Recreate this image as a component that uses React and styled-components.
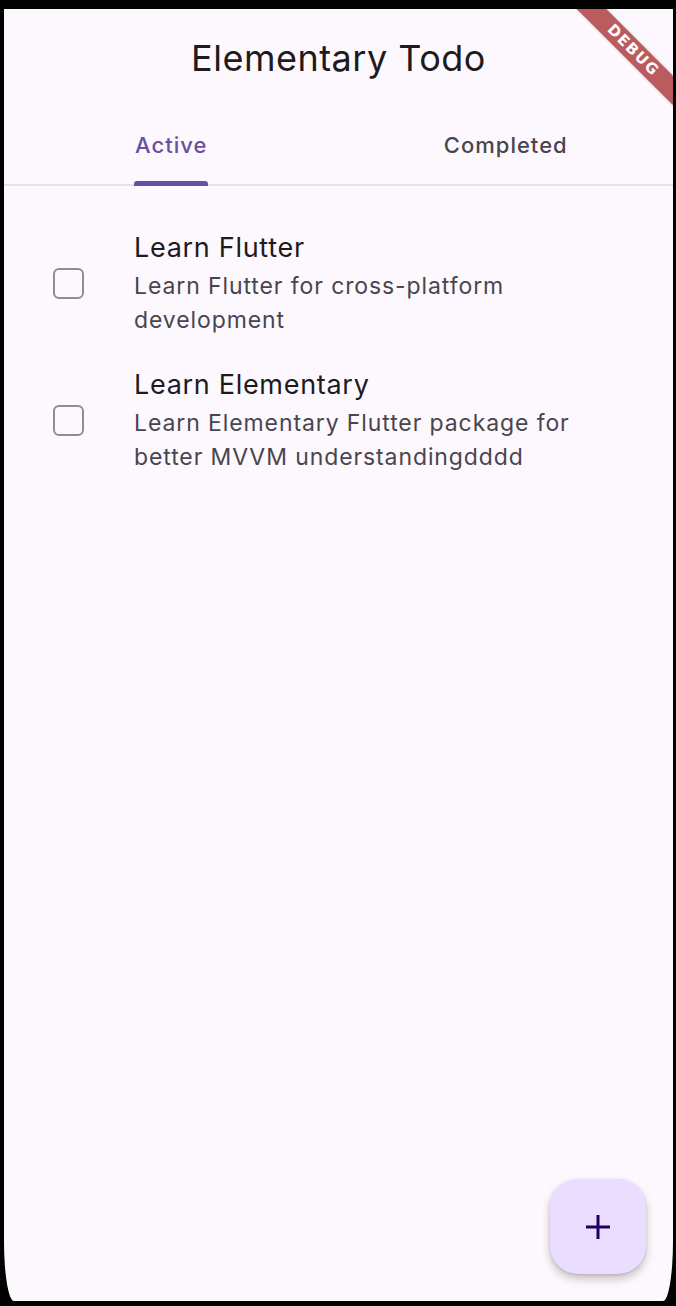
import React from 'react';
import styled, { createGlobalStyle } from 'styled-components';

const colors = {
  surface: '#fdf8fd',
  onSurface: '#1d1b20',
  onSurfaceVariant: '#49454f',
  primary: '#6750a4',
  outline: '#e6e0e9',
  fab: '#eaddff',
  onFab: '#21005d',
};

const GlobalStyle = createGlobalStyle`
  html, body {
    margin: 0;
    padding: 0;
    background: #000;
  }
  body {
    font-family: Inter, 'Noto Sans', sans-serif;
  }
`;

const Screen = styled.div`
  position: relative;
  margin: 9px 3px 0 4px;
  height: 1292px;
  background: ${colors.surface};
  border-bottom-left-radius: 10px 60px;
  border-bottom-right-radius: 10px 60px;
  overflow: hidden;
  display: flex;
  flex-direction: column;
`;

const Title = styled.h1`
  margin: 0;
  padding: 27px 0 23px;
  font-size: 36px;
  line-height: 44px;
  font-weight: 400;
  letter-spacing: 0.5px;
  text-align: center;
  color: ${colors.onSurface};
`;

const TabBar = styled.div`
  display: grid;
  grid-template-columns: 1fr 1fr;
  height: 83px;
  border-bottom: 2px solid ${colors.outline};
  box-sizing: border-box;
`;

const Tab = styled.div`
  display: flex;
  justify-content: center;
  align-items: stretch;
`;

const TabLabel = styled.div`
  position: relative;
  display: flex;
  align-items: center;
  padding-top: 2px;
  font-size: 22px;
  font-weight: 500;
  letter-spacing: 1px;
  color: ${p => (p.$active ? colors.primary : colors.onSurfaceVariant)};

  &::after {
    content: '';
    display: ${p => (p.$active ? 'block' : 'none')};
    position: absolute;
    left: -1px;
    right: -1px;
    bottom: -2px;
    height: 5px;
    border-radius: 3px 3px 0 0;
    background: ${colors.primary};
  }
`;

const List = styled.div`
  padding-top: 29px;
  display: flex;
  flex-direction: column;
`;

const Item = styled.div`
  display: flex;
  align-items: center;
  padding: 15px 53px 15px 49px;
`;

const Check = styled.div`
  width: 27px;
  height: 27px;
  border: 2px solid #8f8c93;
  border-radius: 6px;
  flex-shrink: 0;
  margin-right: 50px;
`;

const Texts = styled.div`
  display: flex;
  flex-direction: column;
  flex: 1;
`;

const ItemTitle = styled.div`
  font-size: 27px;
  line-height: 36px;
  letter-spacing: 0.7px;
  color: ${colors.onSurface};
`;

const ItemSub = styled.div`
  margin-top: 3px;
  font-size: 23px;
  line-height: 34px;
  letter-spacing: 0.9px;
  color: ${colors.onSurfaceVariant};
`;

const Fab = styled.button`
  position: absolute;
  right: 27px;
  bottom: 27px;
  width: 96px;
  height: 95px;
  border: none;
  border-radius: 28px;
  background: ${colors.fab};
  box-shadow: 0 5px 10px rgba(0, 0, 0, 0.22), 0 1px 3px rgba(0, 0, 0, 0.12);
  display: flex;
  align-items: center;
  justify-content: center;
  padding: 0;
`;

const BannerCorner = styled.div`
  position: absolute;
  top: 0;
  right: 0;
  width: 120px;
  height: 120px;
  overflow: hidden;
  pointer-events: none;
`;

const Ribbon = styled.div`
  position: absolute;
  left: 0;
  top: 31px;
  width: 160px;
  height: 21px;
  transform: rotate(45deg);
  background: rgba(160, 30, 30, 0.72);
  box-shadow: 0 0 3px rgba(0, 0, 0, 0.2);
  color: #fff;
  font-family: 'DejaVu Sans', sans-serif;
  font-weight: 700;
  font-size: 15px;
  line-height: 21px;
  letter-spacing: 1.5px;
  text-align: center;
`;

const todos = [
  { title: 'Learn Flutter', desc: 'Learn Flutter for cross-platform development' },
  { title: 'Learn Elementary', desc: 'Learn Elementary Flutter package for better MVVM understandingdddd' },
];

const App = () => (
  <>
    <GlobalStyle />
    <Screen>
      <Title>Elementary Todo</Title>
      <TabBar>
        <Tab><TabLabel $active>Active</TabLabel></Tab>
        <Tab><TabLabel>Completed</TabLabel></Tab>
      </TabBar>
      <List>
        {todos.map(t => (
          <Item key={t.title}>
            <Check />
            <Texts>
              <ItemTitle>{t.title}</ItemTitle>
              <ItemSub>{t.desc}</ItemSub>
            </Texts>
          </Item>
        ))}
      </List>
      <Fab>
        <svg width="26" height="26" viewBox="0 0 26 26">
          <path d="M13 1v24M1 13h24" stroke={colors.onFab} strokeWidth="3" fill="none" />
        </svg>
      </Fab>
      <BannerCorner>
        <Ribbon>DEBUG</Ribbon>
      </BannerCorner>
    </Screen>
  </>
);

export default App;
